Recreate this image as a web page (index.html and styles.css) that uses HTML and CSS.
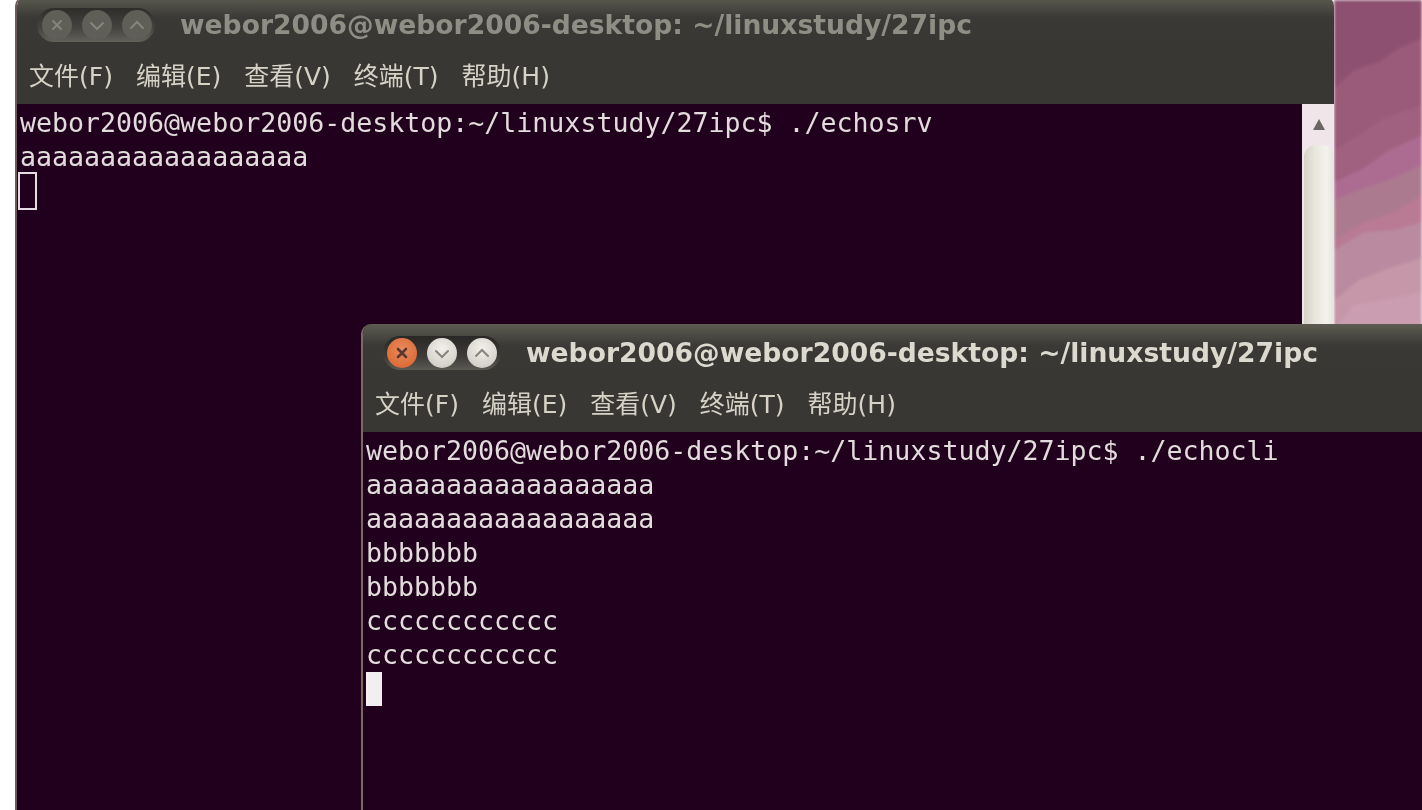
FILE: index.html
```html
<!DOCTYPE html>
<html lang="zh">
<head>
<meta charset="utf-8">
<title>Terminals</title>
<link rel="stylesheet" href="styles.css">
</head>
<body>
<main class="desktop">
  <svg class="wallpaper" viewBox="0 0 88 330" preserveAspectRatio="none" aria-hidden="true">
    <rect width="88" height="330" fill="#8e5071"/>
    <polygon fill="#9a5a79" points="0,88 20,70 45,62 65,48 88,38 88,330 0,330"/>
    <polygon fill="#a0607f" points="0,150 25,135 50,118 88,105 88,330 0,330"/>
    <polygon fill="#ac6c92" points="0,182 30,168 55,150 88,135 88,330 0,330"/>
    <polygon fill="#ac7a8e" points="0,200 25,190 55,180 88,165 88,330 0,330"/>
    <polygon fill="#b97a94" points="0,240 30,222 60,212 88,195 88,330 0,330"/>
    <polygon fill="#ba8aa0" points="0,250 30,232 60,230 88,222 88,330 0,330"/>
    <polygon fill="#c597a8" points="0,300 25,280 55,268 88,258 88,330 0,330"/>
    <polygon fill="#cb9db0" points="0,330 20,305 50,300 88,292 88,330"/>
  </svg>

  <section class="window window-back">
    <header class="titlebar">
      <div class="controls">
        <span class="btn"><svg viewBox="0 0 24 24"><path d="M8 8l8 8M16 8l-8 8"/></svg></span>
        <span class="btn"><svg viewBox="0 0 24 24"><path d="M6 10l6 6 6-6"/></svg></span>
        <span class="btn"><svg viewBox="0 0 24 24"><path d="M6 15l6-6 6 6"/></svg></span>
      </div>
      <h1 class="title">webor2006@webor2006-desktop: ~/linuxstudy/27ipc</h1>
    </header>
    <nav class="menubar">
      <span>文件(F)</span><span>编辑(E)</span><span>查看(V)</span><span>终端(T)</span><span>帮助(H)</span>
    </nav>
    <div class="body">
      <pre class="term">webor2006@webor2006-desktop:~/linuxstudy/27ipc$ ./echosrv
aaaaaaaaaaaaaaaaaa
<span class="cursor-hollow"></span></pre>
      <div class="scrollbar">
        <div class="arrow"></div>
        <div class="thumb"></div>
      </div>
    </div>
  </section>

  <section class="window window-front">
    <header class="titlebar">
      <div class="controls">
        <span class="btn btn-close"><svg viewBox="0 0 24 24"><path d="M8 8l8 8M16 8l-8 8"/></svg></span>
        <span class="btn btn-light"><svg viewBox="0 0 24 24"><path d="M6 10l6 6 6-6"/></svg></span>
        <span class="btn btn-light"><svg viewBox="0 0 24 24"><path d="M6 15l6-6 6 6"/></svg></span>
      </div>
      <h1 class="title">webor2006@webor2006-desktop: ~/linuxstudy/27ipc</h1>
    </header>
    <nav class="menubar">
      <span>文件(F)</span><span>编辑(E)</span><span>查看(V)</span><span>终端(T)</span><span>帮助(H)</span>
    </nav>
    <div class="body">
      <pre class="term">webor2006@webor2006-desktop:~/linuxstudy/27ipc$ ./echocli
aaaaaaaaaaaaaaaaaa
aaaaaaaaaaaaaaaaaa
bbbbbbb
bbbbbbb
cccccccccccc
cccccccccccc
<span class="cursor-solid"></span></pre>
    </div>
  </section>
</main>
</body>
</html>
```
FILE: styles.css
```css
* { box-sizing: border-box; }
html, body { margin: 0; height: 100%; overflow: hidden; background: #fff; }

.desktop {
  position: relative;
  width: 1422px;
  height: 810px;
  overflow: hidden;
  background: #fff;
}
.wallpaper {
  position: absolute;
  left: 1334px;
  top: 0;
  width: 88px;
  height: 330px;
  filter: blur(1.5px);
}

.window {
  position: absolute;
  display: flex;
  flex-direction: column;
  border-left: 2px solid #6e5a5c;
  border-radius: 10px 10px 0 0;
  overflow: hidden;
  filter: blur(0.65px);
}
.window-back { left: 15px; top: -4px; width: 1319px; height: 814px; }
.window-front { left: 361px; top: 324px; width: 1075px; height: 486px; border-left-color: #7a6a62; }

.titlebar {
  flex: none;
  display: flex;
  align-items: center;
  height: 52px;
  padding: 6px 0 0 20px;
  background: linear-gradient(#5c5c53 0, #54544b 10%, #3a3935 42%, #383734 100%);
}

.controls {
  display: flex;
  gap: 10px;
  align-items: center;
  height: 34px;
  width: 118px;
  flex: none;
  padding: 0 4px;
  border-radius: 17px;
  background: linear-gradient(#2e2d2a, #45443f 60%, #62615a);
}
.window-back .controls { padding-left: 5px; }
.window-front .controls { background: linear-gradient(#292826, #3c3b37 60%, #5a5952); }
.btn {
  width: 30px;
  height: 30px;
  flex: none;
  border-radius: 50%;
  background: #5f5e57;
  display: flex;
  align-items: center;
  justify-content: center;
}
.btn svg { width: 24px; height: 24px; fill: none; stroke: #86857c; stroke-width: 2; stroke-linecap: round; }
.btn-close { background: radial-gradient(circle at 50% 40%, #e98a5c, #d8622c); }
.btn-close svg { stroke: #5a3a30; stroke-width: 2.6; }
.btn-light { background: radial-gradient(circle at 50% 35%, #f2f0ea, #c9c6bd); }
.btn-light svg { stroke: #87857d; }

.title {
  margin: 0 0 0 25px;
  font: 700 26.6px/1 "DejaVu Sans", sans-serif;
  white-space: nowrap;
  color: #8f8e84;
}
.window-front .title { color: #dcd9cf; }

.menubar {
  flex: none;
  display: flex;
  align-items: center;
  gap: 23px;
  height: 56px;
  padding: 0 0 0 12px;
  background: #383734;
  color: #d6d2c6;
  font: 400 25px/1 "DejaVu Sans", "Noto Sans CJK SC", sans-serif;
  white-space: nowrap;
}

.body {
  flex: 1;
  min-height: 0;
  display: flex;
  background: #21001d;
}
.term {
  flex: 1;
  margin: 0;
  padding: 2px 0 0 3px;
  font: 400 26.6px/34px "DejaVu Sans Mono", monospace;
  color: #e2dcdc;
}
.cursor-hollow, .cursor-solid {
  display: inline-block;
  vertical-align: top;
}
.cursor-hollow { border: 2px solid #e6dde4; width: 19px; height: 38px; margin: -2px 0 0 -2px; }
.cursor-solid { background: #f3eef2; width: 16px; height: 34px; }

.scrollbar {
  flex: none;
  align-self: flex-start;
  width: 32px;
  height: 220px;
  background: #f0e6ea;
  display: flex;
  flex-direction: column;
  align-items: center;
}
.arrow {
  margin-top: 15px;
  margin-left: 2px;
  width: 0;
  height: 0;
  border-left: 6px solid transparent;
  border-right: 6px solid transparent;
  border-bottom: 11px solid #6b6664;
}
.thumb {
  margin-top: 15px;
  flex: 1;
  width: 30px;
  margin-left: 2px;
  border-radius: 12px 12px 0 0;
  background: linear-gradient(90deg, #d5d2c6, #e8e6dd 35%, #f3f2ec 75%, #e6e4dc);
}
```
